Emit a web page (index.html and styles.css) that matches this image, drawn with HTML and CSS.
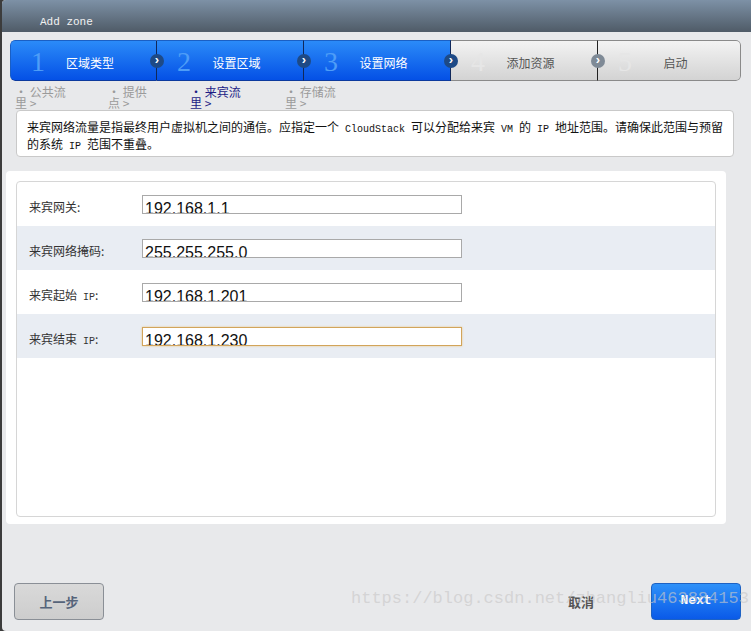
FILE: index.html
```html
<!DOCTYPE html>
<html lang="zh-CN">
<head>
    <meta charset="UTF-8">
    <title>Add zone</title>
    <link rel="stylesheet" href="styles.css">
</head>
<body>

    <div class="dialog">
        <div class="dialog-title">Add zone</div>

        <!-- Wizard steps -->
        <ol class="steps">
            <li class="step done"><span class="num">1</span><span class="label">区域类型</span><i class="arrow">&rsaquo;</i></li>
            <li class="step done"><span class="num">2</span><span class="label">设置区域</span><i class="arrow">&rsaquo;</i></li>
            <li class="step done"><span class="num">3</span><span class="label">设置网络</span><i class="arrow">&rsaquo;</i></li>
            <li class="step"><span class="num">4</span><span class="label">添加资源</span><i class="arrow">&rsaquo;</i></li>
            <li class="step"><span class="num">5</span><span class="label">启动</span></li>
        </ol>

        <ul class="substeps">
            <li>&bull; 公共流<br>里 &gt;</li>
            <li>&bull; 提供<br>点 &gt;</li>
            <li class="active">&bull; 来宾流<br>里 &gt;</li>
            <li>&bull; 存储流<br>里 &gt;</li>
        </ul>

        <div class="info">
            <p>来宾网络流量是指最终用户虚拟机之间的通信。应指定一个<span class="mono"> CloudStack </span>可以分配给来宾<span class="mono"> VM </span>的<span class="mono"> IP </span>地址范围。请确保此范围与预留的系统<span class="mono"> IP </span>范围不重叠。</p>
        </div>

        <!-- Form -->
        <div class="panel">
            <form class="form-box">
                <div class="row">
                    <label for="gw">来宾网关:</label>
                    <input type="text" id="gw" value="192.168.1.1">
                </div>
                <div class="row alt">
                    <label for="mask">来宾网络掩码:</label>
                    <input type="text" id="mask" value="255.255.255.0">
                </div>
                <div class="row">
                    <label for="start">来宾起始<span class="mono"> IP</span>:</label>
                    <input type="text" id="start" value="192.168.1.201">
                </div>
                <div class="row alt">
                    <label for="end">来宾结束<span class="mono"> IP</span>:</label>
                    <input type="text" id="end" class="focused" value="192.168.1.230">
                </div>
            </form>
        </div>

        <div class="actions">
            <button type="button" class="btn-prev">上一步</button>
            <span class="cancel">取消</span>
            <button type="button" class="btn-next">Next</button>
        </div>

        <div class="watermark">https://blog.csdn.net/zhangliu463884153</div>
    </div>

</body>
</html>
```

FILE: styles.css
```css
body {
    margin: 0;
    background-color: #3c3c3c;
    font-family: "Noto Sans CJK SC", "Liberation Sans", sans-serif;
    font-size: 12px;
    color: #222;
}
.dialog {
    position: relative;
    margin-left: 2px;
    height: 631px;
    background-color: #e8e9eb;
    border-radius: 4px 0 0 4px;
    overflow: hidden;
}
.dialog-title {
    height: 32px;
    box-sizing: border-box;
    padding: 15px 0 0 38px;
    background: linear-gradient(#7d91a6, #4f5b67);
    color: #f2f2f2;
    font-family: "Liberation Mono", monospace;
    font-size: 11px;
    line-height: 14px;
}
.mono {
    font-family: "Liberation Mono", monospace;
    font-size: 10px;
}

/* steps */
.steps {
    display: flex;
    list-style: none;
    margin: 8px 10px 0 8px;
    padding: 0;
    height: 41px;
    border-radius: 5px;
    overflow: hidden;
}
.step {
    position: relative;
    width: 147px;
    display: flex;
    align-items: center;
    box-sizing: border-box;
    padding: 0 23px 0 20px;
    background: linear-gradient(#f3f3f3, #d3d3d3);
    border-top: 1px solid #8a8a8a;
    border-bottom: 1px solid #8a8a8a;
    border-right: 1px solid #222;
    color: #555;
}
.step:last-child {
    width: 143px;
    border-right: 1px solid #8a8a8a;
    border-radius: 0 5px 5px 0;
}
.step.done {
    background: linear-gradient(#2b8bf8, #0450e6);
    border-top-color: #1a5fc4;
    border-bottom-color: #0c3a9e;
    border-right-color: #10285a;
    color: #fff;
}
.step.done:first-child {
    border-left: 1px solid #1a5fc4;
    border-radius: 5px 0 0 5px;
}
.num {
    width: 16px;
    padding-top: 2px;
    font-family: "Liberation Serif", serif;
    font-size: 28px;
    color: #e6e6e6;
}
.step.done .num {
    color: #4e9df7;
}
.label {
    flex: 1;
    padding-top: 3px;
    text-align: center;
    font-size: 12px;
}
.arrow {
    position: absolute;
    right: -8px;
    top: 13px;
    z-index: 1;
    width: 14px;
    height: 14px;
    border-radius: 50%;
    background-color: #7f8a96;
    color: #fff;
    font-style: normal;
    font-weight: bold;
    font-family: "Liberation Sans", sans-serif;
    font-size: 13px;
    line-height: 12px;
    text-align: center;
}
.step.done .arrow {
    background-color: #1e4a86;
}

/* sub steps */
.substeps {
    display: flex;
    list-style: none;
    margin: 5px 0 0 13px;
    padding: 0;
    height: 24px;
    color: #9a9a9a;
    font-size: 12px;
    line-height: 11px;
}
.substeps li:nth-child(1) { width: 93px; }
.substeps li:nth-child(2) { width: 82px; }
.substeps li:nth-child(3) { width: 95px; }
.substeps li.active {
    color: #1c1c86;
}

/* info */
.info {
    margin: 0 17px 0 14px;
    height: 47px;
    box-sizing: border-box;
    padding: 9px 0 9px 10px;
    background-color: #fff;
    border: 1px solid #c9c9c9;
    border-radius: 4px;
}
.info p {
    margin: 0;
    line-height: 14px;
    color: #111;
}

/* form */
.panel {
    margin: 14px 25px 0 4px;
    height: 353px;
    box-sizing: border-box;
    padding: 10px;
    background-color: #fff;
    border-radius: 4px;
}
.form-box {
    height: 334px;
    border: 1px solid #d6d6d6;
    border-radius: 4px;
}
.row {
    display: flex;
    align-items: center;
    height: 44px;
    padding-left: 12px;
}
.row.alt {
    background-color: #e9edf3;
}
.row label {
    width: 113px;
    padding-top: 5px;
    color: #333;
}
.row input {
    width: 320px;
    height: 19px;
    box-sizing: border-box;
    margin: 0;
    padding: 10px 2px 0;
    border: 1px solid #a9a9a9;
    background-color: #fff;
    font-family: "Liberation Sans", sans-serif;
    font-size: 16px;
    line-height: 18px;
    color: #111;
    outline: none;
}
.row input.focused {
    border-color: #d2a45a;
    box-shadow: 0 0 2px #e8c88a;
}

/* footer */
.actions {
    display: flex;
    align-items: center;
    margin: 59px 10px 0 12px;
}
.actions button {
    width: 90px;
    height: 37px;
    border-radius: 4px;
    font-size: 13px;
    font-weight: bold;
    cursor: pointer;
}
.btn-prev {
    background: linear-gradient(#d9d9d9, #cdcdcd);
    border: 1px solid #8a8f96;
    color: #56647a;
    font-family: "Noto Sans CJK SC", sans-serif;
}
.cancel {
    margin: 0 57px 0 auto;
    color: #555;
    font-weight: bold;
    font-size: 13px;
}
.btn-next {
    background: linear-gradient(#2e91f9, #0a5ae8);
    border: 1px solid #1d62c4;
    color: #fff;
    font-family: "Liberation Mono", monospace;
    padding-bottom: 4px;
}
.watermark {
    position: absolute;
    left: 349px;
    top: 589px;
    font-family: "Liberation Mono", monospace;
    font-size: 17px;
    color: rgba(200, 200, 200, 0.65);
    pointer-events: none;
}
```
